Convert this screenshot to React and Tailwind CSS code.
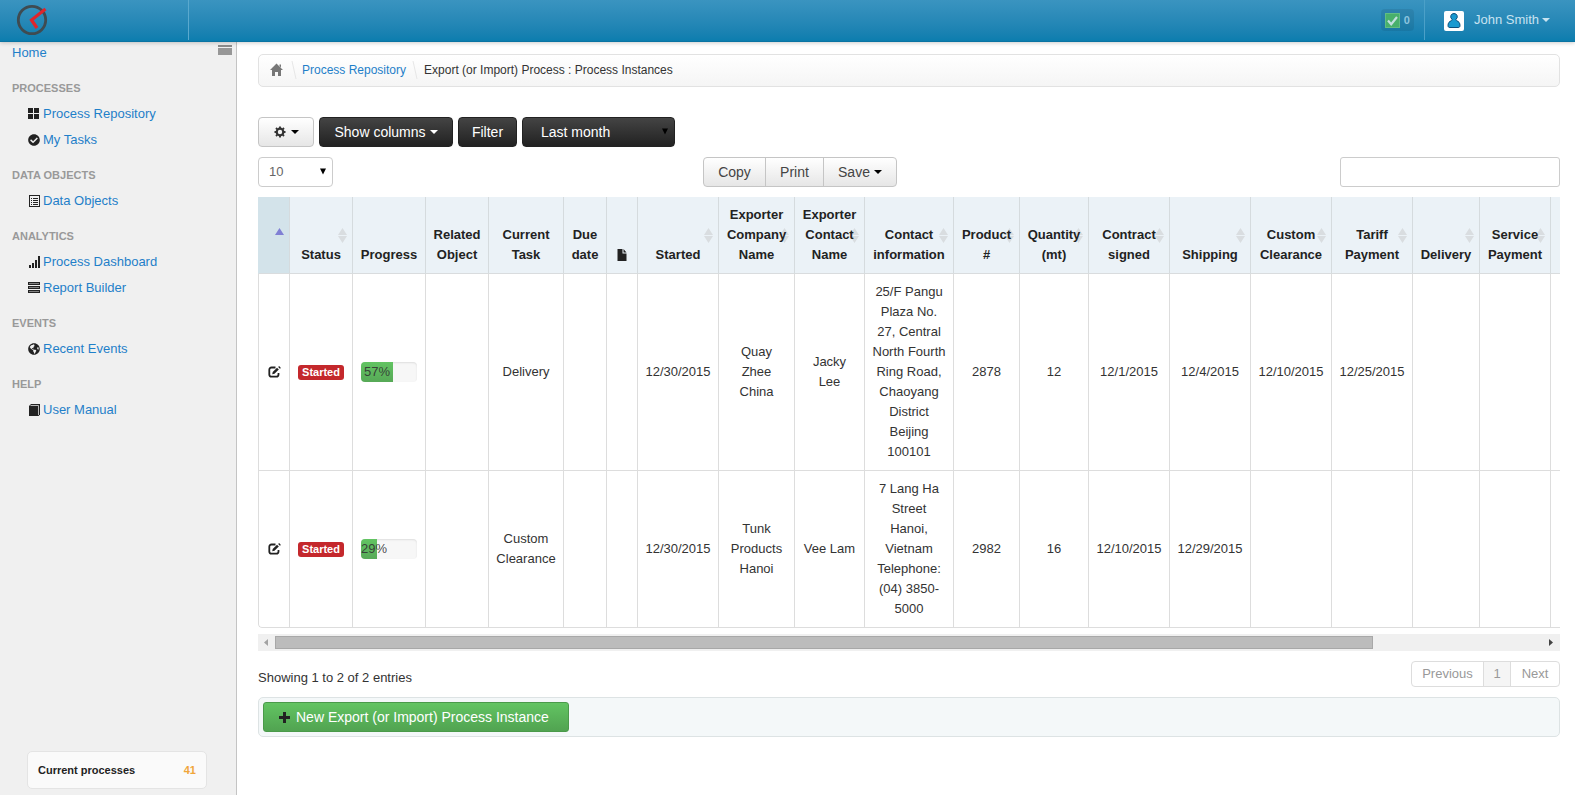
import React from "react";
import { FaCheckCircle, FaGlobeAmericas } from "react-icons/fa";

const GridIcon = () => (
  <svg viewBox="0 0 12 12" className="size-3" fill="#222">
    <path d="M0 0h5v5H0zM6 0h5v5H6zM0 6h5v5H0zM6 6h5v5H6z" />
  </svg>
);

const ListIcon = () => (
  <svg viewBox="0 0 12 12" className="size-3" fill="none" stroke="#222">
    <rect x="1.5" y="0.5" width="10" height="11" />
    <path d="M3 3.5h1M5 3.5h5M3 5.5h1M5 5.5h5M3 7.5h1M5 7.5h5M3 9.5h1M5 9.5h5" />
  </svg>
);

const SignalIcon = () => (
  <svg viewBox="0 0 12 12" className="size-3" fill="#222">
    <path d="M1 9h2v3H1zM4 7h2v5H4zM7 4h2v8H7zM10 0h2v12h-2z" />
  </svg>
);

const TasksIcon = () => (
  <svg viewBox="0 0 12 12" className="size-3" fill="none">
    <path d="M0 0h12v3H0zM0 4h12v3H0zM0 8h12v3H0z" fill="#222" />
    <path d="M1 1.500h10M1 5.500h10M1 9.500h10" stroke="#999" strokeWidth="0.8" />
  </svg>
);

const BookIcon = () => (
  <svg viewBox="0 0 12 12" className="size-3">
    <path d="M1 2l2-2h9v10.5L10.500 12H1z" fill="#222" />
    <path d="M2.500 1.500h8V11" fill="none" stroke="#ddd" strokeWidth="0.8" />
  </svg>
);

const EditIcon = () => (
  <svg viewBox="0 0 13 12" className="block h-3 w-[13px]" fill="none" stroke="#222">
    <path d="M7.500 1.500H3.500a2.200 2.200 0 0 0-2.200 2.200v4.800a2.200 2.200 0 0 0 2.200 2.200h4.800a2.200 2.200 0 0 0 2.200-2.200V7" strokeWidth="1.800" />
    <path d="M4.200 8.300l.5-2.300L9 1.700l1.800 1.800-4.300 4.300z" fill="#222" stroke="none" />
    <path d="M10.200 1l.9-.9 1.800 1.800-1 .9z" fill="#222" stroke="none" />
  </svg>
);

const FileIcon = () => (
  <svg viewBox="0 0 10 12" className="mx-auto mb-1 block h-3 w-[10px]" fill="#222">
    <path d="M0.500 0h5v4.500h4V12h-9zM6.500 0l3 3.500h-3z" />
  </svg>
);

const CogIcon = () => (
  <svg viewBox="0 0 12 12" className="size-3" fill="none" stroke="#333">
    <circle cx="6" cy="6" r="3.300" strokeWidth="2.200" />
    <path d="M6 0.500v2M6 9.500v2M0.500 6h2M9.500 6h2M2 2l1.300 1.300M8.700 8.700l1.300 1.300M2 10l1.300-1.300M8.700 3.300L10 2" strokeWidth="1.900" />
  </svg>
);

const HomeIcon = () => (
  <svg viewBox="0 0 13 13" className="size-[13px]" fill="#777">
    <path d="M6.500 0.500L13 7h-2v6H8V9H5v4H2V7H0zM9.500 1.500h1.500v3l-1.500-1.500z" />
  </svg>
);

const Caret = ({ className = "" }) => (
  <svg viewBox="0 0 8 4" className={"h-1 w-2 " + className} fill="currentColor">
    <path d="M0 0h8L4 4z" />
  </svg>
);

const SelectArrow = () => (
  <svg viewBox="0 0 6 7" className="pointer-events-none absolute top-[11px] right-[7px] h-[7px] w-[6px]" fill="#000">
    <path d="M0 0.500h6L3 6.500z" />
  </svg>
);

const Slash = () => (
  <svg viewBox="0 0 6 18" className="h-[18px] w-[6px]" fill="none" stroke="#e6e6e6">
    <path d="M1 0l4 18" />
  </svg>
);

const menu = [
  ["Processes", [["Process Repository", <GridIcon />], ["My Tasks", <FaCheckCircle className="size-3" />]]],
  ["Data Objects", [["Data Objects", <ListIcon />]]],
  ["Analytics", [["Process Dashboard", <SignalIcon />], ["Report Builder", <TasksIcon />]]],
  ["Events", [["Recent Events", <FaGlobeAmericas className="size-3" />]]],
  ["Help", [["User Manual", <BookIcon />]]],
];

const columns = [
  { label: "", w: "w-[31px]", sort: "asc" },
  { label: "Status", w: "w-[63px]", sort: "both" },
  { label: "Progress", w: "w-[73px]" },
  { label: "Related Object", w: "w-[63px]" },
  { label: "Current Task", w: "w-[75px]" },
  { label: "Due date", w: "w-[43px]" },
  { label: <FileIcon />, w: "w-[31px]" },
  { label: "Started", w: "w-[81px]", sort: "both" },
  { label: "Exporter Company Name", w: "w-[76px]", sort: "both" },
  { label: "Exporter Contact Name", w: "w-[70px]", sort: "both" },
  { label: "Contact information", w: "w-[89px]", sort: "both" },
  { label: "Product #", w: "w-[66px]", sort: "both" },
  { label: "Quantity (mt)", w: "w-[69px]", sort: "both" },
  { label: "Contract signed", w: "w-[81px]", sort: "both" },
  { label: "Shipping", w: "w-[81px]", sort: "both" },
  { label: "Custom Clearance", w: "w-[81px]", sort: "both" },
  { label: "Tariff Payment", w: "w-[81px]", sort: "both" },
  { label: "Delivery", w: "w-[67px]", sort: "both" },
  { label: "Service Payment", w: "w-[71px]", sort: "both" },
  { label: "", w: "w-[210px]" },
];

const rows = [
  {
    progress: 57,
    inset: true,
    cells: ["", "Delivery", "", "", "12/30/2015", "Quay Zhee China", "Jacky Lee", "25/F Pangu Plaza No. 27, Central North Fourth Ring Road, Chaoyang District Beijing 100101", "2878", "12", "12/1/2015", "12/4/2015", "12/10/2015", "12/25/2015", "", "", ""],
  },
  {
    progress: 29,
    cells: ["", "Custom Clearance", "", "", "12/30/2015", "Tunk Products Hanoi", "Vee Lam", "7 Lang Ha Street Hanoi, Vietnam Telephone: (04) 3850-5000", "2982", "16", "12/10/2015", "12/29/2015", "", "", "", "", ""],
  },
];

const darkButton =
  "h-[30px] rounded-[4px] border border-[#222] bg-linear-to-b from-[#444] to-[#222] text-[14px] text-white";
const lightButton =
  "h-[30px] border border-[#c5c5c5] bg-linear-to-b from-white to-[#e6e6e6] text-[14px] text-[#444]";
const cellBase = "border-b border-l border-[#ddd] py-2 text-center";
const cell = cellBase + " px-[7px]";

function TopBar() {
  return (
    <header className="relative z-10 flex h-[42px] border-b border-[#0a74a3] bg-linear-to-b from-[#3a94c0] to-[#0b7dae] shadow-[0_1px_4px_rgba(0,0,0,0.2)]">
      <a href="#home" aria-label="Dashboard" className="h-10 w-[189px] border-r border-[#5aa9ce] pt-1 pl-4">
        <svg viewBox="0 0 34 32" className="h-8 w-[34px]" fill="none">
          <circle cx="16" cy="16" r="13.700" stroke="#3f4b51" strokeWidth="2.800" />
          <path d="M29.500 5L15.500 16l5.500 8" stroke="#e0242b" strokeWidth="3.200" />
        </svg>
      </a>
      <div className="ml-auto flex h-10">
        <button className="mt-[9px] mr-[10px] flex h-[22px] items-center gap-1 rounded-[4px] bg-black/8 px-1 text-[11px] font-bold text-[#8cc4de]">
          <svg viewBox="0 0 15 15" className="size-[15px]" fill="none">
            <rect x="0.500" y="0.500" width="14" height="14" fill="#48b06c" stroke="#62bd83" />
            <path d="M3 7.500l3.200 3.700L12 4" stroke="#c3dfe0" strokeWidth="2.200" />
          </svg>
          0
        </button>
        <button className="flex items-center border-l border-[#4ba0c8] pr-[25px] pl-[19px] text-[13px] text-[#c8e3f1]">
          <svg viewBox="0 0 20 20" className="mt-[2px] mr-[10px] size-5">
            <rect width="20" height="20" rx="2" fill="#fff" />
            <path d="M10 2.500a3.200 3.200 0 0 1 2.200 5.600c-.4.500-.3 1 .3 1.500C14.800 10.500 16 12 16 14.500c0 1.500-.7 2-2 2H6c-1.300 0-2-.5-2-2C4 12 5.200 10.500 7.500 9.600c.6-.5.7-1 .3-1.500A3.200 3.200 0 0 1 10 2.500z" fill="#1a9ad0" stroke="#0b4f7c" strokeWidth="1" />
          </svg>
          John Smith
          <Caret className="ml-[3px]" />
        </button>
      </div>
    </header>
  );
}

function Sidebar() {
  return (
    <aside className="flex w-[237px] shrink-0 flex-col border-r border-[#c4c4c4] bg-[#f0f0f0] pb-[6px]">
      <div className="flex h-6 items-start justify-between pt-px pr-1 pl-3">
        <a href="#home" className="text-[13px] leading-5 text-[#1f7fc9]">Home</a>
        <button aria-label="Toggle sidebar" className="mt-[2px] flex w-[14px] flex-col gap-px">
          <span className="h-[2px] bg-[#8c8c8c]" />
          <span className="h-[7px] bg-[#979797]" />
        </button>
      </div>
      <nav className="flex flex-col">
        {menu.map(([title, items]) => (
          <section key={title} className="pt-3">
            <h2 className="pl-3 text-[11px] leading-5 font-bold text-[#999] uppercase">{title}</h2>
            <ul className="pt-[3px]">
              {items.map(([label, icon]) => (
                <li key={label}>
                  <a href="#section" className="flex h-[26px] items-center gap-[3px] pl-7 text-[13px] text-[#1f7fc9]">
                    <span className="text-[#222]">{icon}</span>
                    {label}
                  </a>
                </li>
              ))}
            </ul>
          </section>
        ))}
      </nav>
      <div className="mt-auto mr-[29px] ml-[27px] flex h-[38px] items-center justify-between rounded-[5px] border border-[#e4e4e4] bg-[#fafafa] px-[10px] text-[11px] font-bold text-[#222]">
        <span>Current processes</span>
        <span className="text-[#f0a63a]">41</span>
      </div>
    </aside>
  );
}

function SortMark({ kind }) {
  if (!kind) return null;
  return (
    <svg viewBox="0 0 9 15" className="absolute top-[31px] right-[5px] h-[15px] w-[9px]">
      <path d="M4.500 0L9 7H0z" fill={kind === "asc" ? "#8080d4" : "#d9dde0"} />
      {kind === "both" && <path d="M0 8h9l-4.500 7z" fill="#d9dde0" />}
    </svg>
  );
}

function DataTable() {
  return (
    <div className="overflow-hidden rounded-bl-[4px]">
      <table className="w-[1483px] table-fixed border-separate border-spacing-0 text-[13px] leading-5 text-[#333]">
        <colgroup>
          {columns.map((c, i) => (
            <col key={i} className={c.w} />
          ))}
        </colgroup>
        <thead>
          <tr>
            {columns.map((c, i) => (
              <th
                key={i}
                aria-sort={c.sort === "asc" ? "ascending" : undefined}
                className={
                  "relative h-[77px] border-b border-l border-b-[#d9dcde] px-[7px] py-2 text-center align-bottom font-bold text-[#222] " +
                  (c.sort === "asc" ? "border-l-[#d3e3ea] bg-[#d3e3ea]" : "border-l-[#d5dbde] bg-[#ebf2f7]")
                }
              >
                <SortMark kind={c.sort} />
                <span className="relative -mx-1 block">{c.label}</span>
              </th>
            ))}
          </tr>
        </thead>
        <tbody>
          {rows.map((r, i) => (
            <tr key={i}>
              <td className={cell + (i === 1 ? " rounded-bl-[4px]" : "")}>
                <button aria-label="Edit" className="mx-auto block">
                  <EditIcon />
                </button>
              </td>
              <td className={cellBase + " px-2"}>
                <span className="block h-[15px] rounded-[3px] bg-[#c4282c] text-[11px] leading-[15px] font-bold text-white">
                  Started
                </span>
              </td>
              <td className={cellBase + " px-2"}>
                <div className="relative h-5 overflow-hidden rounded-[4px] bg-[#f7f7f7] text-left shadow-[inset_0_1px_2px_rgba(0,0,0,0.1)]">
                  <div className="absolute inset-y-0 left-0 bg-linear-to-b from-[#62c462] to-[#57a957]" style={{ width: r.progress + "%" }} />
                  <span className={"relative text-[#333]/90 " + (r.inset ? "pl-[3px]" : "")}>{r.progress}%</span>
                </div>
              </td>
              {r.cells.map((t, j) => (
                <td key={j} className={cell}>{t}</td>
              ))}
            </tr>
          ))}
        </tbody>
      </table>
    </div>
  );
}

function ScrollBar() {
  return (
    <div className="mt-[6px] flex h-[17px] items-center bg-[#f0f0f0]">
      <svg viewBox="0 0 17 17" className="size-[17px]" fill="#a3a3a3">
        <path d="M10 5v7L6 8.500z" />
      </svg>
      <div className="flex-1">
        <div className="h-[13px] w-[86.6%] border border-[#a8a8a8] bg-[#bcbcbc]" />
      </div>
      <svg viewBox="0 0 17 17" className="size-[17px]" fill="#444">
        <path d="M6 5v7l4-3.500z" />
      </svg>
    </div>
  );
}

export default function App() {
  return (
    <div className="flex min-h-screen flex-col bg-white font-['Liberation_Sans',Arial,sans-serif] text-[#333]">
      <TopBar />
      <div className="flex flex-1">
        <Sidebar />
        <main className="min-w-0 flex-1 pt-3 pr-[15px] pl-[21px]">
          <nav className="flex h-[33px] items-center rounded-[5px] border border-[#e2e2e2] bg-linear-to-b from-white to-[#f5f5f5] pb-[2px] pl-[11px] text-[12px]">
            <a href="#home" aria-label="Home" className="mr-2"><HomeIcon /></a>
            <Slash />
            <a href="#repository" className="mr-[6px] ml-[5px] text-[#1f7fc9]">Process Repository</a>
            <Slash />
            <span className="ml-[6px]">Export (or Import) Process : Process Instances</span>
          </nav>

          <div className="mt-[30px] flex gap-[5px]">
            <button aria-label="Settings" className={lightButton + " flex w-14 items-center justify-center gap-[5px] rounded-[4px]"}>
              <CogIcon />
              <Caret className="text-black" />
            </button>
            <button className={darkButton + " flex w-[134px] items-center justify-center gap-1"}>
              Show columns
              <Caret />
            </button>
            <button className={darkButton + " w-[59px]"}>Filter</button>
            <div className="relative w-[153px]">
              <select aria-label="Period" className={darkButton + " w-full appearance-none pl-[18px]"}>
                <option>Last month</option>
              </select>
              <SelectArrow />
            </div>
          </div>

          <div className="mt-[10px] grid grid-cols-3">
            <div className="relative w-[75px]">
              <select aria-label="Rows per page" className="h-[30px] w-full appearance-none rounded-[4px] border border-[#ccc] bg-white pl-[10px] text-[13px] text-[#666]">
                <option>10</option>
              </select>
              <SelectArrow />
            </div>
            <div className="flex pl-[11px]">
              <button className={lightButton + " w-[63px] rounded-l-[4px]"}>Copy</button>
              <button className={lightButton + " -ml-px w-[59px]"}>Print</button>
              <button className={lightButton + " -ml-px flex w-[74px] items-center justify-center gap-1 rounded-r-[4px]"}>
                Save
                <Caret className="text-black" />
              </button>
            </div>
            <input type="text" aria-label="Search" className="h-[30px] w-[220px] justify-self-end rounded-[3px] border border-[#ccc] bg-white px-2 text-[14px]" />
          </div>

          <div className="mt-[10px]">
            <DataTable />
          </div>
          <ScrollBar />

          <div className="mt-[10px] flex h-[26px] items-start justify-between text-[13px]">
            <p className="pt-[7px] leading-5">Showing 1 to 2 of 2 entries</p>
            <div className="flex h-[26px] overflow-hidden rounded-[4px] border border-[#ddd] text-[#999]">
              <button className="w-[71px]">Previous</button>
              <button className="w-7 border-x border-[#ddd] bg-[#f5f5f5]">1</button>
              <button className="w-12">Next</button>
            </div>
          </div>

          <div className="mt-[10px] rounded-[5px] border border-[#dde3e4] bg-[#f4f8f9] p-1">
            <button className="flex h-[30px] w-[306px] items-center gap-[6px] rounded-[3px] border border-[#4a9a4a] bg-linear-to-b from-[#62c462] to-[#51a351] pl-[15px] text-[14px] text-white">
              <svg viewBox="0 0 11 11" className="size-[11px]" fill="#222">
                <path d="M4 0h3v4h4v3H7v4H4V7H0V4h4z" />
              </svg>
              New Export (or Import) Process Instance
            </button>
          </div>
        </main>
      </div>
    </div>
  );
}
